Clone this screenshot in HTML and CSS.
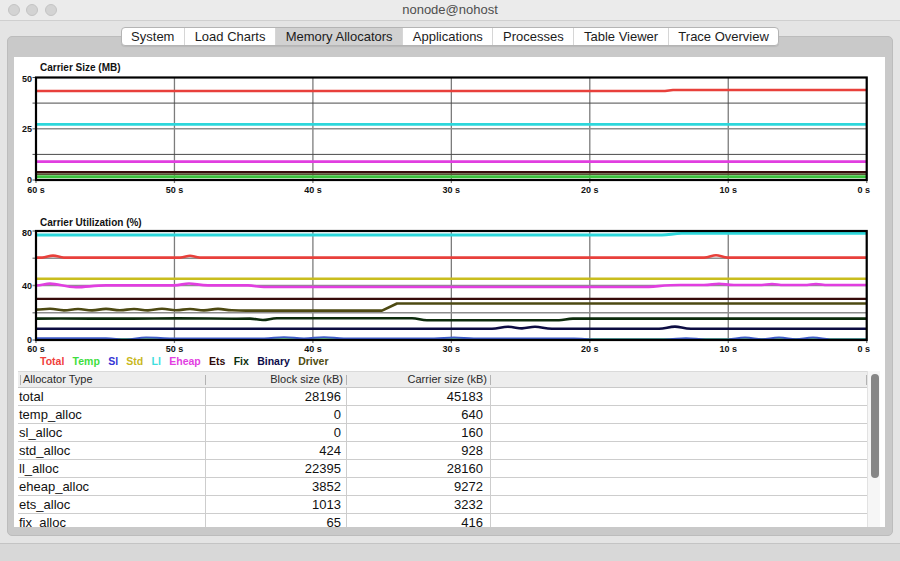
FILE: index.html
```html
<!DOCTYPE html>
<html>
<head>
<meta charset="utf-8">
<title>nonode@nohost</title>
<link rel="stylesheet" href="styles.css">
</head>
<body>
<div class="titlebar">
  <div class="lights"><span class="light"></span><span class="light"></span><span class="light"></span></div>
  <div class="wtitle">nonode@nohost</div>
  <div></div>
</div>
<div class="tabs">
  <div class="tab">System</div>
  <div class="tab">Load Charts</div>
  <div class="tab active">Memory Allocators</div>
  <div class="tab">Applications</div>
  <div class="tab">Processes</div>
  <div class="tab">Table Viewer</div>
  <div class="tab">Trace Overview</div>
</div>
<div class="pane">
  <div class="content">
    <svg class="chart" width="871" height="143" viewBox="0 0 871 143">
      <text class="ctitle" x="26" y="13.5">Carrier Size (MB)</text>
      <g class="vgrid">
        <line x1="160.45" y1="20.5" x2="160.45" y2="126"/>
        <line x1="298.9" y1="20.5" x2="298.9" y2="126"/>
        <line x1="437.35" y1="20.5" x2="437.35" y2="126"/>
        <line x1="575.8" y1="20.5" x2="575.8" y2="126"/>
        <line x1="714.25" y1="20.5" x2="714.25" y2="126"/>
        <line x1="852.7" y1="20.5" x2="852.7" y2="126"/>
        <line x1="22" y1="20.5" x2="22" y2="126"/>
      </g>
      <g class="hgrid-dark">
        <line x1="18.5" y1="46.1" x2="852.7" y2="46.1"/>
        <line x1="18.5" y1="97.4" x2="852.7" y2="97.4"/>
        <line x1="18.5" y1="20.5" x2="22" y2="20.5"/>
        <line x1="18.5" y1="123" x2="22" y2="123"/>
      </g>
      <g class="hgrid-mid">
        <line x1="18.5" y1="71.75" x2="852.7" y2="71.75"/>
      </g>
      <path class="ln red" d="M22,34 L651,34 L659,33 L852.7,33"/>
      <path class="ln cyan" d="M22,67.3 L852.7,67.3"/>
      <path class="ln magenta" d="M22,104.6 L852.7,104.6"/>
      <path class="ln ets" d="M22,115.2 L852.7,115.2"/>
      <path class="ln driver-thin" d="M22,117.1 L852.7,117.1"/>
      <path class="ln green" d="M22,119.8 L852.7,119.8"/>
      <rect class="frame" x="22" y="20.5" width="830.7" height="102.5"/>
      <g class="axis">
        <text x="18" y="24.5" text-anchor="end">50</text>
        <text x="18" y="75" text-anchor="end">25</text>
        <text x="18" y="126" text-anchor="end">0</text>
        <text x="22" y="135.5" text-anchor="middle">60 s</text>
        <text x="160.45" y="135.5" text-anchor="middle">50 s</text>
        <text x="298.9" y="135.5" text-anchor="middle">40 s</text>
        <text x="437.35" y="135.5" text-anchor="middle">30 s</text>
        <text x="575.8" y="135.5" text-anchor="middle">20 s</text>
        <text x="714.25" y="135.5" text-anchor="middle">10 s</text>
        <text x="856" y="135.5" text-anchor="end">0 s</text>
      </g>
    </svg>
    <svg class="chart" width="871" height="155" viewBox="0 0 871 155">
      <text class="ctitle" x="26" y="25.5">Carrier Utilization (%)</text>
      <g class="vgrid">
        <line x1="160.45" y1="31" x2="160.45" y2="143"/>
        <line x1="298.9" y1="31" x2="298.9" y2="143"/>
        <line x1="437.35" y1="31" x2="437.35" y2="143"/>
        <line x1="575.8" y1="31" x2="575.8" y2="143"/>
        <line x1="714.25" y1="31" x2="714.25" y2="143"/>
        <line x1="852.7" y1="31" x2="852.7" y2="143"/>
        <line x1="22" y1="31" x2="22" y2="143"/>
      </g>
      <g class="hgrid-mid">
        <line x1="18.5" y1="58.25" x2="852.7" y2="58.25"/>
        <line x1="18.5" y1="85.5" x2="852.7" y2="85.5"/>
        <line x1="18.5" y1="112.75" x2="852.7" y2="112.75"/>
      </g>
      <g class="hgrid-dark">
        <line x1="18.5" y1="31" x2="22" y2="31"/>
        <line x1="18.5" y1="140" x2="22" y2="140"/>
      </g>
      <path class="ln cyan" d="M22,35 L648,35 C655,35 660,33.4 668,33.4 L852.7,33.4"/>
      <path class="ln red" d="M22,57.6 L28,57.6 C32,57.6 35,55.6 39,55.6 C43,55.6 46,57.6 50,57.6 L166,57.6 C170,57.6 173,55.8 176,55.8 C179,55.8 182,57.6 186,57.6 L690,57.6 C695,57.6 698,55.2 702,55.2 C706,55.2 709,57.6 714,57.6 L852.7,57.6"/>
      <path class="ln yellow" d="M22,78.8 L852.7,78.8"/>
      <path class="ln magenta" d="M22,85.5 C28,85.5 31,83.6 36,83.6 C44,83.6 52,87.2 62,87.2 C72,87.2 80,85.4 92,85.4 L160,85.4 C166,85.4 170,83.5 175,83.5 C181,83.5 186,85.4 194,85.4 L234,85.4 C240,85.4 244,87 250,87 L628,87 C640,87 650,85 666,85 L690,85 C696,85 700,83.8 705,83.8 C710,83.8 714,85 720,85 L746,85 C751,85 754,84 758,84 C762,84 765,85 770,85 L790,85 C795,85 798,84 802,84 C806,84 809,85 814,85 L852.7,85"/>
      <path class="ln ets" d="M22,98.8 L852.7,98.8"/>
      <path class="ln driver" d="M22,109.6 C28,109.6 30,108.8 36,108.8 C42,108.8 44,110.4 50,110.4 C56,110.4 58,109 64,109 C70,109 72,110.4 78,110.4 C84,110.4 86,108.9 92,108.9 C98,108.9 100,110.3 106,110.3 C112,110.3 114,109 120,109 C126,109 128,110.4 134,110.4 C140,110.4 142,108.8 148,108.8 C154,108.8 156,110.3 162,110.3 C168,110.3 170,109 176,109 C182,109 184,110.4 190,110.4 C196,110.4 198,108.9 204,108.9 C210,108.9 212,110.3 218,110.3 C224,110.3 226,110.6 232,110.6 L368,110.6 L383,103.5 L852.7,103.5"/>
      <path class="ln fix" d="M22,118.6 C60,118.2 100,119 140,118.5 C180,118 210,119 236,118.6 C241,118.6 244,120 249,120 C254,120 257,118.2 263,118.2 L398,118.2 C404,118.2 407,120.2 413,120.2 L545,120.2 C550,120.2 553,118.6 559,118.6 L852.7,118.6"/>
      <path class="ln binary" d="M22,128.8 L478,128.8 C484,128.8 488,126.8 494,126.8 C500,126.8 503,128.4 508,128.4 C513,128.4 516,126.8 521,126.8 C527,126.8 531,128.8 538,128.8 L645,128.8 C651,128.8 655,126.6 661,126.6 C666,126.6 670,128.8 677,128.8 L852.7,128.8"/>
      <path class="ln temp" d="M22,139.2 L852.7,139.2"/>
      <path class="ln sl" d="M22,138.2 L92,138.2 C100,138.2 104,139.6 112,139.6 C120,139.6 124,137.4 132,137.4 C140,137.4 146,138.4 156,138.4 L250,138.4 C258,138.4 262,137.3 270,137.3 C278,137.3 282,138.4 290,138.4 C298,138.4 302,137.3 310,137.3 C318,137.3 322,138.4 330,138.4 L420,138.4 C428,138.4 432,137.4 440,137.4 C448,137.4 452,138.4 460,138.4 L560,138.4 C566,138.4 570,139.4 580,139.4 L650,139.4 C660,139.4 664,138.2 672,138.2 C680,138.2 684,139.4 692,139.4 L714,139.4 C720,139.4 724,137.6 731,137.6 C738,137.6 742,139.2 748,139.2 C754,139.2 758,137.6 765,137.6 C772,137.6 776,139.2 782,139.2 C788,139.2 792,137.6 799,137.6 C806,137.6 810,139.4 816,139.4 L852.7,139.4"/>
      <rect class="frame" x="22" y="31" width="830.7" height="109"/>
      <g class="axis">
        <text x="18" y="35.5" text-anchor="end">80</text>
        <text x="18" y="89" text-anchor="end">40</text>
        <text x="18" y="142.5" text-anchor="end">0</text>
        <text x="22" y="152" text-anchor="middle">60 s</text>
        <text x="160.45" y="152" text-anchor="middle">50 s</text>
        <text x="298.9" y="152" text-anchor="middle">40 s</text>
        <text x="437.35" y="152" text-anchor="middle">30 s</text>
        <text x="575.8" y="152" text-anchor="middle">20 s</text>
        <text x="714.25" y="152" text-anchor="middle">10 s</text>
        <text x="856" y="152" text-anchor="end">0 s</text>
      </g>
    </svg>
    <div class="legend">
      <span class="lg-total">Total</span>
      <span class="lg-temp">Temp</span>
      <span class="lg-sl">Sl</span>
      <span class="lg-std">Std</span>
      <span class="lg-ll">Ll</span>
      <span class="lg-eheap">Eheap</span>
      <span class="lg-ets">Ets</span>
      <span class="lg-fix">Fix</span>
      <span class="lg-binary">Binary</span>
      <span class="lg-driver">Driver</span>
    </div>
    <div class="table-wrap">
      <div class="table">
        <div class="thead">
          <div class="th first">Allocator Type</div>
          <div class="th num">Block size (kB)</div>
          <div class="th num">Carrier size (kB)</div>
          <div class="th"></div>
        </div>
        <div class="row"><div class="td">total</div><div class="td num">28196</div><div class="td num car">45183</div><div class="td"></div></div>
        <div class="row"><div class="td">temp_alloc</div><div class="td num">0</div><div class="td num car">640</div><div class="td"></div></div>
        <div class="row"><div class="td">sl_alloc</div><div class="td num">0</div><div class="td num car">160</div><div class="td"></div></div>
        <div class="row"><div class="td">std_alloc</div><div class="td num">424</div><div class="td num car">928</div><div class="td"></div></div>
        <div class="row"><div class="td">ll_alloc</div><div class="td num">22395</div><div class="td num car">28160</div><div class="td"></div></div>
        <div class="row"><div class="td">eheap_alloc</div><div class="td num">3852</div><div class="td num car">9272</div><div class="td"></div></div>
        <div class="row"><div class="td">ets_alloc</div><div class="td num">1013</div><div class="td num car">3232</div><div class="td"></div></div>
        <div class="row"><div class="td">fix_alloc</div><div class="td num">65</div><div class="td num car">416</div><div class="td"></div></div>
      </div>
      <div class="vscroll"><div class="thumb"></div></div>
    </div>
  </div>
</div>
<div class="statusbar"></div>
</body>
</html>
```
FILE: styles.css
```css
* { box-sizing: border-box; }
html, body { margin: 0; padding: 0; }
body {
  width: 900px;
  height: 561px;
  overflow: hidden;
  background: #e4e4e4;
  font-family: "Liberation Sans", Arial, sans-serif;
  display: flex;
  flex-direction: column;
}
.titlebar {
  height: 21px;
  flex: none;
  background: #ebebeb;
  border-bottom: 1px solid #cfcfcf;
  display: grid;
  grid-template-columns: 1fr auto 1fr;
  align-items: center;
}
.lights { display: flex; gap: 6.5px; padding-left: 7.5px; }
.light {
  width: 12px; height: 12px; border-radius: 50%;
  background: #d3d3d3; border: 1px solid #c4c4c4;
}
.wtitle { font-size: 13px; color: #4e4e4e; line-height: 20px; }
.tabs {
  align-self: center;
  flex: none;
  display: flex;
  margin-top: 6px;
  height: 19px;
  background: #fff;
  border: 1px solid #b4b4b4;
  border-radius: 4px;
  overflow: hidden;
  position: relative;
  z-index: 1;
  box-shadow: 0 1px 1px rgba(0,0,0,0.08);
}
.tab {
  padding: 0 9.6px;
  font-size: 13px;
  line-height: 17px;
  color: #1c1c1c;
  border-left: 1px solid #d6d6d6;
  white-space: nowrap;
}
.tab:first-child { border-left: 0; }
.tab.active { background: #d1d1d1; }
.pane {
  flex: none;
  margin: -10px 7px 0;
  height: 500px;
  background: #c9c9c9;
  border: 1px solid #bcbcbc;
  border-radius: 5px;
  padding: 20px 7px 8px 6px;
}
.content {
  background: #fff;
  height: 470px;
  display: flex;
  flex-direction: column;
}
.chart { display: block; flex: none; }
.ctitle { font: bold 10px "Liberation Sans", Arial, sans-serif; fill: #111; }
.axis text { font: bold 9px "Liberation Sans", Arial, sans-serif; fill: #111; }
.vgrid line { stroke: #7c7c7c; stroke-width: 1.3; }
.hgrid-dark line { stroke: #4a4a4a; stroke-width: 1; }
.hgrid-mid line { stroke: #8e8e8e; stroke-width: 1.6; }
.frame { fill: none; stroke: #000; stroke-width: 2.2; }
.ln { fill: none; stroke-width: 2.6; stroke-linejoin: round; }
.red { stroke: #e8403b; }
.cyan { stroke: #2dd7db; stroke-width: 2.8; }
.magenta { stroke: #e13ee0; }
.yellow { stroke: #c9bd1e; }
.ets { stroke: #360b0b; stroke-width: 2.3; }
.driver { stroke: #4d4a12; }
.driver-thin { stroke: #5a5235; stroke-width: 1.6; }
.fix { stroke: #0c2c0c; }
.binary { stroke: #0c0c42; }
.green { stroke: #3cc23c; stroke-width: 3; }
.temp { stroke: #3cc83c; stroke-width: 2; }
.sl { stroke: #3c5ac8; stroke-width: 2; }
.legend {
  flex: none;
  display: flex;
  gap: 8.3px;
  padding-left: 26px;
  height: 12px;
  font-size: 10.5px;
  line-height: 12px;
  font-weight: bold;
}
.lg-total { color: #f0403c; }
.lg-temp { color: #3ede3e; }
.lg-sl { color: #3434d4; }
.lg-std { color: #c8b822; }
.lg-ll { color: #3edede; }
.lg-eheap { color: #e23ee2; }
.lg-ets { color: #300a0a; }
.lg-fix { color: #0c300c; }
.lg-binary { color: #0c0c4a; }
.lg-driver { color: #4e4c10; }
.table-wrap {
  flex: none;
  margin: 4px 5px 0 4px;
  height: 156px;
  display: flex;
  overflow: hidden;
}
.table { flex: 1; overflow: hidden; }
.thead, .row {
  display: grid;
  grid-template-columns: 188px 141px 144px 1fr;
}
.thead {
  height: 17px;
  background: #ededed;
  border-top: 1px solid #dadada;
  border-bottom: 1px solid #c9c9c9;
  font-size: 11px;
  line-height: 15px;
  color: #2a2a2a;
}
.th {
  padding: 0 4px 0 5px;
  white-space: nowrap;
  background: linear-gradient(#b3b3b3, #b3b3b3) no-repeat right 0 center / 1px 10px;
}
.th.first {
  background:
    linear-gradient(#b3b3b3, #b3b3b3) no-repeat 2px center / 1px 10px,
    linear-gradient(#b3b3b3, #b3b3b3) no-repeat right 0 center / 1px 10px;
}
.th.num { text-align: right; }
.row {
  height: 18px;
  border-bottom: 1px solid #cdcdcd;
  font-size: 13px;
  line-height: 17px;
  color: #111;
}
.td {
  border-right: 1px solid #cdcdcd;
  padding-left: 1px;
  white-space: nowrap;
}
.td:last-child { border-right: 0; }
.td.num { text-align: right; padding-right: 5px; }
.td.num.car { padding-right: 7px; }
.vscroll {
  flex: none;
  width: 13px;
  background: #f6f6f6;
  border-left: 1px solid #e2e2e2;
  padding: 3px 0 0 3px;
}
.thumb {
  width: 7.5px;
  height: 104px;
  border-radius: 4px;
  background: #868686;
}
.statusbar {
  margin-top: auto;
  height: 18px;
  flex: none;
  background: #d8d8d8;
  border-top: 1px solid #c4c4c4;
}
```
